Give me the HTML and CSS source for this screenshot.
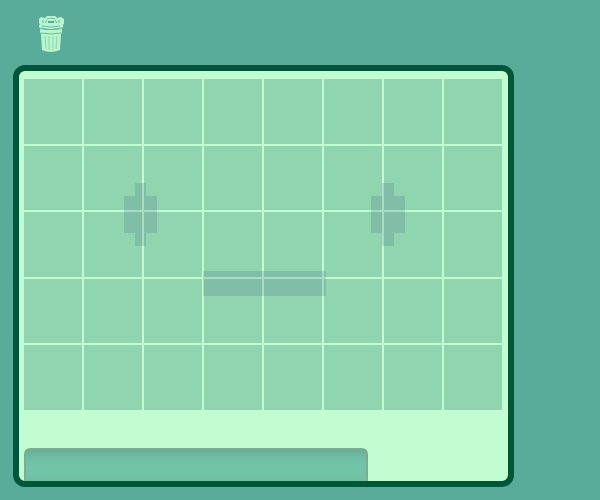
FILE: index.html
```
<!DOCTYPE html>
<html lang="en">
<head>
<meta charset="utf-8">
<title>Pixel board</title>
<link rel="stylesheet" href="styles.css">
</head>
<body>
<header class="toolbar">
  <button class="trash" type="button" aria-label="Clear board">
    <svg viewBox="0 0 26 38" aria-hidden="true">
      <path class="light" d="M1 4l2-2 4 1 2-2h8l2 2 4-1 3 2v5l-3 2H3L1 8z"/>
      <path class="shade" d="M9 4q4-2 8 0M5 5v3M21 5v3M7 8l2-3M19 8l-2-3"/>
      <path class="dark" d="M10 6h6v2h-6z"/>
      <path class="light" d="M1 10h24v2l-2 2H3l-2-2z"/>
      <path class="shade" d="M4 11q9 2 18 0"/>
      <path class="light" d="M2 14q11 2 22 0v3l-1 2-1 16q-9 4-18 0L3 19l-1-2z"/>
      <path class="shade" d="M2 13q11 3 22 0M3 18q10 2 20 0"/>
      <path class="rib" d="M7 21l1 13M11 21v14M15 21v14M19 21l-1 13"/>
    </svg>
  </button>
</header>
<main class="panel">
  <div class="board">
    <div class="cells">
      <i></i><i></i><i></i><i></i><i></i><i></i><i></i><i></i>
      <i></i><i></i><i></i><i></i><i></i><i></i><i></i><i></i>
      <i></i><i></i><i></i><i></i><i></i><i></i><i></i><i></i>
      <i></i><i></i><i></i><i></i><i></i><i></i><i></i><i></i>
      <i></i><i></i><i></i><i></i><i></i><i></i><i></i><i></i>
    </div>
    <svg class="face" viewBox="0 0 478 331" shape-rendering="crispEdges" aria-hidden="true">
      <path d="M111 104h11v13h11v37h-11v13h-11v-13h-11v-37h11z"/>
      <path d="M358 104h12v13h11v37h-11v13h-12v-13h-11v-37h11z"/>
      <path d="M179 192h123v25h-123z"/>
    </svg>
  </div>
  <div class="tray"></div>
</main>
</body>
</html>
```
FILE: styles.css
```
* {
  box-sizing: border-box;
}

body {
  margin: 0;
  padding: 15px 86px 13px 13px;
  background: #5aac9a;
  font-family: "Liberation Sans", sans-serif;
}

.toolbar {
  display: flex;
  padding: 0 25px 12px;
}

.trash {
  display: flex;
  padding: 0;
  border: 0;
  background: none;
  cursor: pointer;
}

.trash svg {
  width: 26px;
  height: 38px;
}

.light {
  fill: #b9f6cd;
}

.dark {
  fill: #5aac9a;
}

.shade,
.rib {
  fill: none;
  stroke: #6cbba3;
  stroke-width: 1;
}

.rib {
  stroke: #8ad4b5;
}

.panel {
  overflow: hidden;
  padding: 8px 6px 0 5px;
  border: 6px solid #005638;
  border-radius: 12px;
  background: #c2fdd1;
}

.board {
  position: relative;
  aspect-ratio: 478 / 331;
}

.cells {
  display: grid;
  grid-template-columns: repeat(8, 1fr);
  grid-template-rows: repeat(5, 1fr);
  gap: 2px;
  height: 100%;
}

.cells i {
  background: #91d5b0;
}

.face {
  position: absolute;
  inset: 0;
  width: 100%;
  height: 100%;
  fill: rgba(60, 98, 141, 0.2);
}

.tray {
  width: 72%;
  height: 33px;
  margin-top: 38px;
  border: 2px solid #81ab91;
  border-bottom: 0;
  border-radius: 6px 6px 0 0;
  background: linear-gradient(#66b298, #6fc1a4 30%, #71c6aa 60%, #70bf9f);
}
```
